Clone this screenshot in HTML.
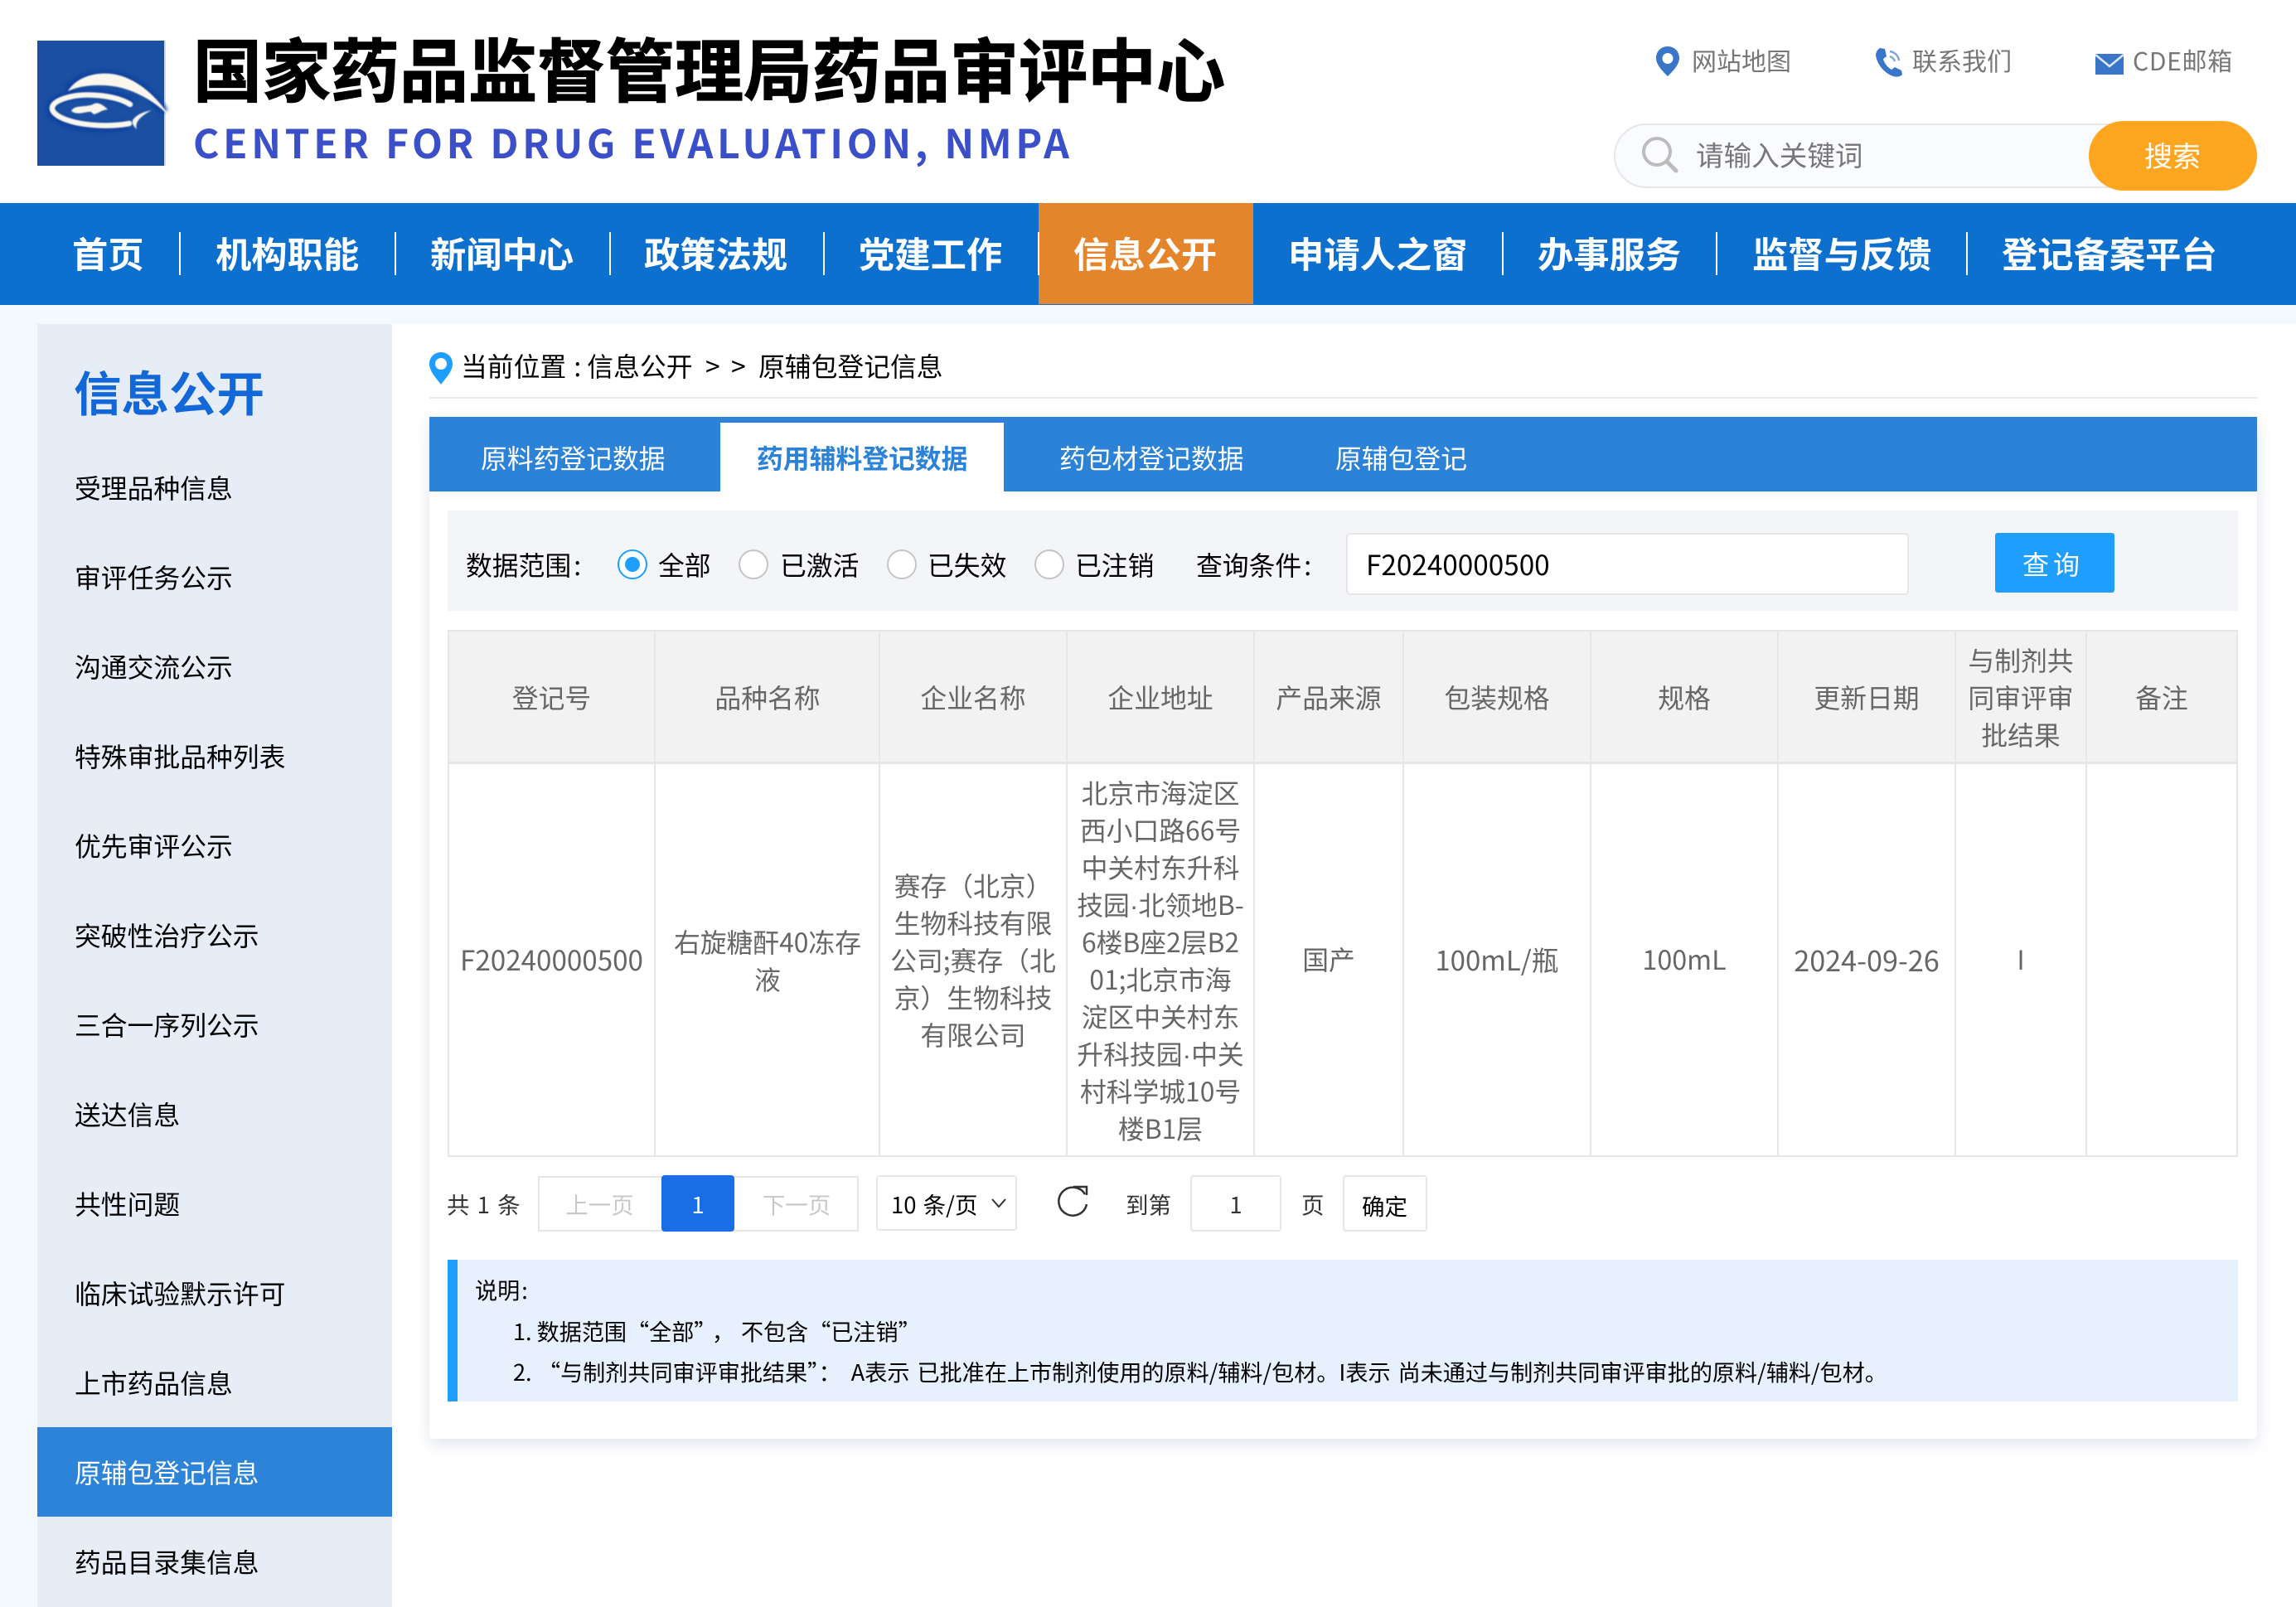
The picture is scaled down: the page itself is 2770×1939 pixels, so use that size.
<!DOCTYPE html>
<html lang="zh-CN">
<head>
<meta charset="utf-8">
<title>国家药品监督管理局药品审评中心</title>
<style>
html,body{margin:0;padding:0;}
body{width:2770px;height:1939px;position:relative;overflow:hidden;background:#fff;font-family:"Noto Sans CJK SC","Liberation Sans",sans-serif;color:#000;}
.a{position:absolute;}
.t{position:absolute;white-space:nowrap;line-height:60px;height:60px;font-size:31.8px;}
.c{text-align:center;}
.b{font-weight:700;}
.w{color:#fff;}
.g{color:#666;}
.nv{font-size:43.3px;font-weight:700;color:#fff;top:275px;}
.sp{position:absolute;top:280px;width:2px;height:52px;background:#fff;}
.si{left:90px;}
.vl{position:absolute;top:760px;height:635px;width:2px;background:#e6e6e6;}
.th{top:811px;color:#666;text-align:center;}
.td{color:#666;text-align:center;top:1127px;}
.ml{position:absolute;white-space:nowrap;text-align:center;color:#666;font-size:31.8px;line-height:45px;}
.dot{font-family:"Liberation Sans",sans-serif;line-height:1;}
.pg{font-size:27.5px;top:1422px;}
.bx{position:absolute;box-sizing:border-box;background:#fff;border:2px solid #e6e6e6;}
.rd{position:absolute;box-sizing:border-box;width:36px;height:36px;top:663px;border-radius:50%;border:2px solid #c4c4c4;background:#fff;}
.nt{font-size:27.1px;}
</style>
</head>
<body>
<!-- page backgrounds -->
<div class="a" style="left:0;top:368px;width:2770px;height:23px;background:#f4f8ff;"></div>
<div class="a" style="left:0;top:368px;width:45px;height:1571px;background:#f4f8ff;"></div>

<!-- logo -->
<svg class="a" style="left:40px;top:45px;" width="170" height="160" viewBox="0 0 170 160">
<defs><filter id="bl" x="-20%" y="-20%" width="140%" height="140%"><feGaussianBlur stdDeviation="0.9"/></filter>
<filter id="bl2" x="-20%" y="-20%" width="140%" height="140%"><feGaussianBlur stdDeviation="2.5"/></filter></defs>
<rect x="5" y="4" width="153" height="151" fill="#1a4fa2"/>
<rect x="158" y="4" width="2" height="151" fill="#c9d8ef"/>
<g fill="none" stroke="#073f9e" stroke-width="10" filter="url(#bl2)">
<path d="M42 64C55 45 90 40 115 52C135 60 150 78 158 90"/>
<path d="M118 80C100 67 60 64 38 72C18 80 16 90 30 98C55 112 95 110 117 105"/>
</g>
<g filter="url(#bl)">
<path d="M42 65C55 43 90 38 115 50C135 59 152 76 165 96C150 80 130 68 110 62C90 56 60 56 42 65Z" fill="#fbf6ec"/>
<path d="M117 81C100 70 62 66 40 73C20 79 18 88 32 96C55 108 95 108 116 104" fill="none" stroke="#fbf6ec" stroke-width="6.5" stroke-linecap="round"/>
<path d="M143 88C132 90 124 94 120 100C119 105 122 108 125 111C123 104 126 97 143 88Z" fill="#fbf6ec"/>
<path d="M46 89C50 81 62 85 72 81C76 78 82 79 90 87C82 88 80 91 76 92C73 94 72 92 70 90C64 89 54 95 46 89Z" fill="#fbf6ec"/>
</g>
</svg>

<div class="t b" style="left:233px;top:30px;height:100px;line-height:100px;font-size:83px;-webkit-text-stroke:1.2px #000;">国家药品监督管理局药品审评中心</div>
<div class="t b" style="left:233px;top:140px;height:60px;line-height:60px;font-size:48px;color:#3a4fc8;letter-spacing:4.55px;">CENTER FOR DRUG EVALUATION, NMPA</div>

<!-- top links -->
<svg class="a" style="left:1998px;top:56px;" width="28" height="36" viewBox="0 0 28 36"><path fill-rule="evenodd" d="M14 0C6 0 0 6 0 14C0 23 10 32 14 36C18 32 28 23 28 14C28 6 22 0 14 0ZM14 8A6.500 6.500 0 1 1 14 21A6.500 6.500 0 1 1 14 8Z" fill="#3a76c8"/></svg>
<div class="t" style="left:2041px;top:42px;font-size:30px;color:#777;">网站地图</div>
<svg class="a" style="left:2262px;top:57px;" width="34" height="36" viewBox="0 0 34 36"><path d="M6 1L12 2L14 11L10 14C11 19 15 24 20 27L24 24L32 28L33 33C30 36 26 36 22 35C11 31 3 21 1 10C1 6 3 3 6 1Z" fill="#3a76c8"/><path d="M18 5C24 6 28 10 29 16M18 11C21 12 23 14 24 17" fill="none" stroke="#7fa4da" stroke-width="2.500"/></svg>
<div class="t" style="left:2307px;top:42px;font-size:30px;color:#777;">联系我们</div>
<svg class="a" style="left:2528px;top:65px;" width="34" height="25" viewBox="0 0 34 25"><rect width="34" height="25" fill="#3a76c8"/><path d="M0 1L17 15L34 1" fill="none" stroke="#dfe9f7" stroke-width="2.500"/></svg>
<div class="t" style="left:2573px;top:42px;font-size:30px;color:#777;letter-spacing:.7px;">CDE邮箱</div>

<!-- search -->
<div class="a" style="box-sizing:border-box;left:1947px;top:149px;width:640px;height:78px;border:2px solid #e6e6e6;border-radius:39px;background:#f9fbfe;"></div>
<svg class="a" style="left:1980px;top:164px;" width="46" height="46" viewBox="0 0 46 46"><circle cx="19" cy="19" r="16" fill="none" stroke="#bcbcbc" stroke-width="4"/><path d="M31 31L42 42" stroke="#bcbcbc" stroke-width="5" stroke-linecap="round"/></svg>
<div class="t" style="left:2046px;top:156px;font-size:33.600px;color:#777;">请输入关键词</div>
<div class="a" style="left:2520px;top:146px;width:203px;height:84px;border-radius:42px;background:#ffa621;"></div>
<div class="t c w" style="left:2520px;top:157px;width:202px;font-size:34px;">搜索</div>

<!-- nav -->
<div class="a" style="left:0;top:245px;width:2770px;height:123px;background:#0d6fce;"></div>
<div class="a" style="left:1253px;top:245px;width:259px;height:122px;background:#e4842b;"></div>
<div class="sp" style="left:216px;"></div><div class="sp" style="left:476px;"></div><div class="sp" style="left:735px;"></div><div class="sp" style="left:993px;"></div><div class="sp" style="left:1252px;"></div><div class="sp" style="left:1812px;"></div><div class="sp" style="left:2070px;"></div><div class="sp" style="left:2372px;"></div>
<div class="t nv" style="left:87px;">首页</div>
<div class="t nv" style="left:260px;">机构职能</div>
<div class="t nv" style="left:519px;">新闻中心</div>
<div class="t nv" style="left:777px;">政策法规</div>
<div class="t nv" style="left:1036px;">党建工作</div>
<div class="t nv" style="left:1295px;">信息公开</div>
<div class="t nv" style="left:1554px;">申请人之窗</div>
<div class="t nv" style="left:1855px;">办事服务</div>
<div class="t nv" style="left:2114px;">监督与反馈</div>
<div class="t nv" style="left:2415px;">登记备案平台</div>

<!-- sidebar -->
<div class="a" style="left:45px;top:391px;width:428px;height:1548px;background:#e6edf6;"></div>
<div class="a" style="left:45px;top:1722px;width:428px;height:108px;background:#2c83d8;"></div>
<div class="t b" style="left:89px;top:441px;font-size:57.5px;color:#1268d8;">信息公开</div>
<div class="t si" style="top:558px;">受理品种信息</div>
<div class="t si" style="top:666px;">审评任务公示</div>
<div class="t si" style="top:774px;">沟通交流公示</div>
<div class="t si" style="top:882px;">特殊审批品种列表</div>
<div class="t si" style="top:990px;">优先审评公示</div>
<div class="t si" style="top:1098px;">突破性治疗公示</div>
<div class="t si" style="top:1206px;">三合一序列公示</div>
<div class="t si" style="top:1314px;">送达信息</div>
<div class="t si" style="top:1422px;">共性问题</div>
<div class="t si" style="top:1530px;">临床试验默示许可</div>
<div class="t si" style="top:1638px;">上市药品信息</div>
<div class="t si w" style="top:1746px;">原辅包登记信息</div>
<div class="t si" style="top:1854px;">药品目录集信息</div>

<!-- breadcrumb -->
<svg class="a" style="left:518px;top:425px;" width="28" height="39" viewBox="0 0 28 39"><path fill-rule="evenodd" d="M14 0C6 0 0 6 0 14C0 24 10 33 14 39C18 33 28 24 28 14C28 6 22 0 14 0ZM14 7A7 7 0 1 1 14 21A7 7 0 1 1 14 7Z" fill="#1e9fff"/></svg>
<div class="t" style="left:556px;top:411px;">当前位置<span style="margin-left:2px;">&nbsp;:&nbsp;</span>信息公开</div>
<div class="t" style="left:851px;top:411px;">&gt;</div>
<div class="t" style="left:882px;top:411px;">&gt;</div>
<div class="t" style="left:915px;top:411px;">原辅包登记信息</div>
<div class="a" style="left:518px;top:479px;width:2205px;height:2px;background:#e8e8e8;"></div>

<!-- card -->
<div class="a" style="left:518px;top:503px;width:2205px;height:1233px;background:#fff;border-radius:0 0 5px 5px;box-shadow:0 6px 18px rgba(60,90,140,.16);"></div>
<div class="a" style="left:518px;top:503px;width:2205px;height:90px;background:#2b82d7;"></div>
<div class="a" style="left:869px;top:510px;width:342px;height:83px;background:#fff;"></div>
<div class="t w" style="left:580px;top:522px;">原料药登记数据</div>
<div class="t b" style="left:913px;top:522px;color:#2b82d7;">药用辅料登记数据</div>
<div class="t w" style="left:1278px;top:522px;">药包材登记数据</div>
<div class="t w" style="left:1611px;top:522px;">原辅包登记</div>

<!-- filter -->
<div class="a" style="left:540px;top:616px;width:2160px;height:121px;background:#f4f5f9;"></div>
<div class="t" style="left:562px;top:651px;">数据范围<span style="margin-left:3px;">:</span></div>
<div class="rd" style="left:745px;border-color:#1e9fff;"></div>
<div class="a" style="left:754px;top:672px;width:18px;height:18px;border-radius:50%;background:#1e9fff;"></div>
<div class="t" style="left:794px;top:651px;">全部</div>
<div class="rd" style="left:891px;"></div>
<div class="t" style="left:941px;top:651px;">已激活</div>
<div class="rd" style="left:1070px;"></div>
<div class="t" style="left:1119px;top:651px;">已失效</div>
<div class="rd" style="left:1248px;"></div>
<div class="t" style="left:1297px;top:651px;">已注销</div>
<div class="t" style="left:1443px;top:651px;">查询条件<span style="margin-left:3px;">:</span></div>
<div class="bx" style="left:1624px;top:643px;width:679px;height:75px;border-radius:5px;"></div>
<div class="t" style="left:1648px;top:650px;font-size:33.3px;">F20240000500</div>
<div class="a" style="left:2407px;top:643px;width:144px;height:72px;background:#1e9fff;border-radius:3px;"></div>
<div class="t w" style="left:2440px;top:650px;font-size:32px;letter-spacing:5px;">查询</div>

<!-- table -->
<div class="a" style="left:541px;top:761px;width:2158px;height:159px;background:#f2f2f2;"></div>
<div class="a" style="left:540px;top:760px;width:2160px;height:2px;background:#e6e6e6;"></div>
<div class="a" style="left:540px;top:919px;width:2160px;height:3px;background:#e6e6e6;"></div>
<div class="a" style="left:540px;top:1394px;width:2160px;height:2px;background:#e6e6e6;"></div>
<div class="vl" style="left:540px;"></div><div class="vl" style="left:789px;"></div><div class="vl" style="left:1060px;"></div><div class="vl" style="left:1286px;"></div><div class="vl" style="left:1512px;"></div><div class="vl" style="left:1692px;"></div><div class="vl" style="left:1918px;"></div><div class="vl" style="left:2144px;"></div><div class="vl" style="left:2358px;"></div><div class="vl" style="left:2516px;"></div><div class="vl" style="left:2698px;"></div>

<div class="t th" style="left:541px;width:249px;">登记号</div>
<div class="t th" style="left:792px;width:268px;">品种名称</div>
<div class="t th" style="left:1062px;width:224px;">企业名称</div>
<div class="t th" style="left:1288px;width:224px;">企业地址</div>
<div class="t th" style="left:1514px;width:178px;">产品来源</div>
<div class="t th" style="left:1694px;width:224px;">包装规格</div>
<div class="t th" style="left:1920px;width:224px;">规格</div>
<div class="t th" style="left:2146px;width:212px;">更新日期</div>
<div class="ml" style="left:2360px;width:156px;top:774px;">与制剂共<br>同审评审<br>批结果</div>
<div class="t th" style="left:2518px;width:180px;">备注</div>

<div class="t td" style="left:541px;width:249px;font-size:33.2px;">F20240000500</div>
<div class="ml" style="left:792px;width:268px;top:1114px;">右旋糖酐40冻存<br>液</div>
<div class="ml" style="left:1062px;width:224px;top:1046px;">赛存（北京）<br>生物科技有限<br>公司;赛存（北<br>京）生物科技<br>有限公司</div>
<div class="ml" style="left:1288px;width:224px;top:934px;">北京市海淀区<br>西小口路66号<br>中关村东升科<br>技园<span class="dot">·</span>北领地B-<br>6楼B座2层B2<br>01;北京市海<br>淀区中关村东<br>升科技园<span class="dot">·</span>中关<br>村科学城10号<br>楼B1层</div>
<div class="t td" style="left:1514px;width:178px;">国产</div>
<div class="t td" style="left:1694px;width:224px;font-size:33px;">100mL/瓶</div>
<div class="t td" style="left:1920px;width:224px;font-size:32.3px;">100mL</div>
<div class="t td" style="left:2146px;width:212px;font-size:34.2px;">2024-09-26</div>
<div class="t td" style="left:2360px;width:156px;">I</div>

<!-- pagination -->
<div class="t pg" style="left:539px;color:#333;word-spacing:3px;">共 1 条</div>
<div class="bx" style="left:649px;top:1419px;width:387px;height:67px;"></div>
<div class="a" style="left:798px;top:1418px;width:88px;height:68px;background:#196de5;border-radius:4px;"></div>
<div class="t pg c" style="left:649px;width:149px;color:#c8c8c8;">上一页</div>
<div class="t pg c w" style="left:798px;width:88px;">1</div>
<div class="t pg c" style="left:886px;width:150px;color:#c8c8c8;">下一页</div>
<div class="bx" style="left:1057px;top:1418px;width:170px;height:67px;border-radius:4px;"></div>
<div class="t pg" style="left:1075px;word-spacing:2px;">10 条/页</div>
<svg class="a" style="left:1195px;top:1445px;" width="20" height="14" viewBox="0 0 20 14"><path d="M2 2L10 11L18 2" fill="none" stroke="#333" stroke-width="2"/></svg>
<svg class="a" style="left:1275px;top:1429px;" width="40" height="40" viewBox="0 0 40 40"><path d="M34 12A17 17 0 1 0 36 24" fill="none" stroke="#333" stroke-width="2.500"/><path d="M20 3H36V13" fill="none" stroke="#333" stroke-width="2.500"/></svg>
<div class="t pg" style="left:1358px;color:#333;">到第</div>
<div class="bx" style="left:1436px;top:1418px;width:110px;height:68px;border-radius:4px;"></div>
<div class="t pg c" style="left:1436px;width:110px;color:#333;">1</div>
<div class="t pg" style="left:1570px;color:#333;">页</div>
<div class="bx" style="left:1620px;top:1418px;width:102px;height:68px;border-radius:4px;"></div>
<div class="t pg c" style="left:1620px;width:101px;top:1424px;">确定</div>

<!-- note -->
<div class="a" style="left:540px;top:1520px;width:2160px;height:171px;background:#e7f0fd;"></div>
<div class="a" style="left:540px;top:1520px;width:12px;height:171px;background:#1e9fff;"></div>
<div class="t nt" style="left:573px;top:1526px;">说明<span style="margin-left:2px;">:</span></div>
<div class="t nt" style="left:619px;top:1576px;">1. 数据范围“全部”<span style="margin-left:8px;">，</span><span style="margin-left:8px;">不包含</span>“已注销”</div>
<div class="t nt" style="left:619px;top:1625px;word-spacing:3px;"><span style="display:inline-block;width:30px;">2.</span>“与制剂共同审评审批结果”：<span style="margin-left:12px;">A表示 已批准在上市制剂使用的原料/辅料/包材。I表示 尚未通过与制剂共同审评审批的原料/辅料/包材。</span></div>
</body>
</html>
